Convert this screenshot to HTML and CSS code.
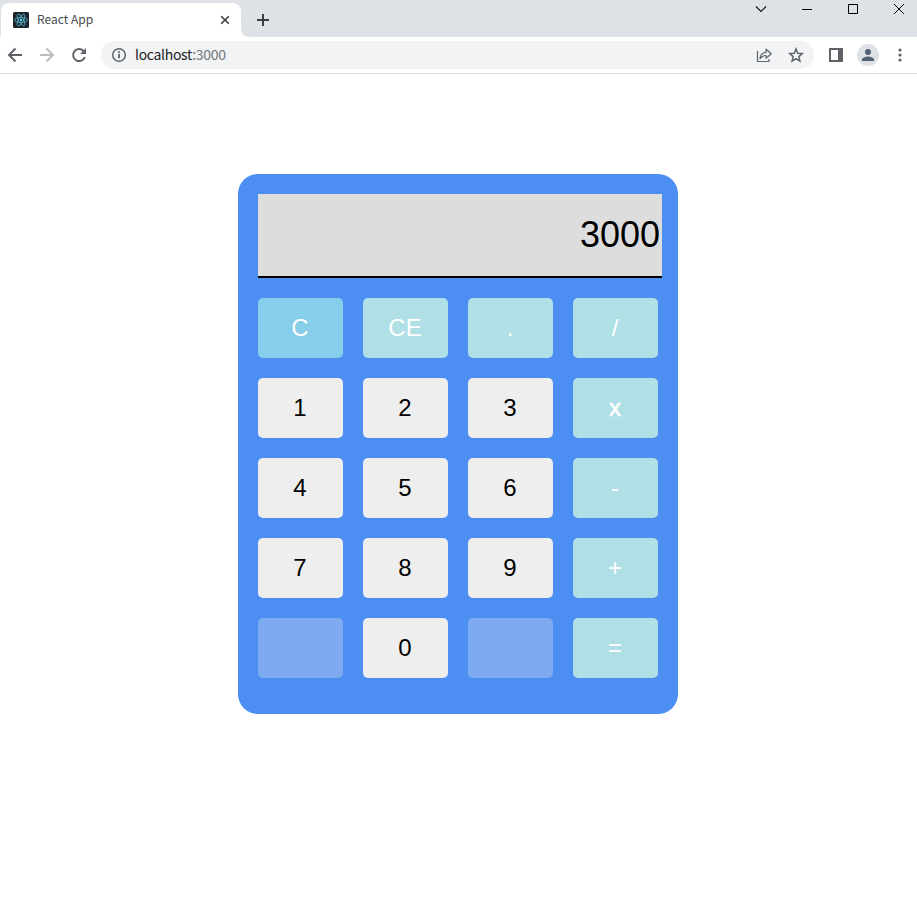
FILE: index.html
```
<!DOCTYPE html>
<html lang="en">
<head>
<meta charset="utf-8">
<title>React App</title>
<link rel="stylesheet" href="styles.css">
</head>
<body>
<header class="browser">
  <div class="tabstrip">
    <div class="tab">
      <svg class="favicon" width="16" height="16" viewBox="0 0 16 16"><rect width="16" height="16" rx="1.5" fill="#20232a"/><g fill="none" stroke="#53b5cf" stroke-width=".8"><ellipse cx="8" cy="8" rx="6.5" ry="2.5"/><ellipse cx="8" cy="8" rx="6.5" ry="2.5" transform="rotate(60 8 8)"/><ellipse cx="8" cy="8" rx="6.5" ry="2.5" transform="rotate(120 8 8)"/></g><circle cx="8" cy="8" r="1.3" fill="#61dafb"/></svg>
      <span class="tab-title">React App</span>
      <svg class="tab-close" width="10" height="10" viewBox="0 0 10 10"><path d="M1.2 1.2l7.6 7.6M8.8 1.2L1.2 8.8" stroke="#3c4043" stroke-width="1.6"/></svg>
    </div>
    <svg class="tab-curve" width="8" height="8" viewBox="0 0 8 8"><path d="M0 0v8h8a8 8 0 0 1-8-8z" fill="#fff"/></svg>
    <svg class="new-tab" width="12" height="12" viewBox="0 0 12 12"><path d="M6 0v12M0 6h12" stroke="#3c4043" stroke-width="2"/></svg>
    <div class="window-controls">
      <svg width="12" height="12" viewBox="0 0 12 12"><path d="M1 3.5l5 5 5-5" fill="none" stroke="#111" stroke-width="1.1"/></svg>
      <svg width="12" height="12" viewBox="0 0 12 12"><path d="M1 6.5h10" stroke="#000"/></svg>
      <svg width="12" height="12" viewBox="0 0 12 12"><path d="M1.5 1.5h9v9h-9z" fill="none" stroke="#000"/></svg>
      <svg width="12" height="12" viewBox="0 0 12 12"><path d="M1 1l10 10M11 1L1 11" stroke="#000"/></svg>
    </div>
  </div>
  <div class="toolbar">
    <svg class="nav" width="16" height="16" viewBox="0 0 16 16"><path d="M15 8H2M8.5 1.5L2 8l6.500 6.500" fill="none" stroke="#5f6368" stroke-width="2"/></svg>
    <svg class="nav" width="16" height="16" viewBox="0 0 16 16"><path d="M1 8h13M7.500 1.500L14 8l-6.500 6.500" fill="none" stroke="#babcbe" stroke-width="2"/></svg>
    <svg class="nav" width="16" height="16" viewBox="0 0 16 16"><path d="M13.800 10A6 6 0 1 1 12.500 4L14 5.500" fill="none" stroke="#5f6368" stroke-width="2"/><path d="M15 1v6H9z" fill="#5f6368"/></svg>
    <div class="address">
      <svg width="16" height="16" viewBox="0 0 16 16"><circle cx="8" cy="8" r="6.300" fill="none" stroke="#5f6368" stroke-width="1.500"/><path d="M8 7v4.300M8 4.200v1.800" stroke="#5f6368" stroke-width="1.800"/></svg>
      <span class="url">localhost<span class="port">:3000</span></span>
      <svg class="share" width="16" height="16" viewBox="0 0 16 16"><path d="M1.500 4v10.500h11.500v-2.500" fill="none" stroke="#5f6368" stroke-width="1.200"/><path d="M4 11.500c.5-4 2.500-6 6-6V2.200L15.300 6.700l-5.300 4.500V8.500c-2.500 0-4 .8-6 3z" fill="none" stroke="#5f6368" stroke-width="1.200" stroke-linejoin="round"/></svg>
      <svg class="star" width="16" height="16" viewBox="0 0 16 16"><path d="M8 2l1.750 4.200 4.550.4-3.450 3 1.050 4.500L8 11.700l-3.900 2.400 1.050-4.500-3.450-3 4.550-.4z" fill="none" stroke="#5f6368" stroke-width="1.500"/></svg>
    </div>
    <svg class="panel-icon" width="14" height="14" viewBox="0 0 14 14"><path fill="#5f6368" fill-rule="evenodd" d="M0 0h14v14H0zM2 2v10h7V2z"/></svg>
    <svg class="avatar" width="22" height="22" viewBox="0 0 22 22"><circle cx="11" cy="11" r="11" fill="#dee1e6"/><circle cx="11" cy="8" r="3" fill="#535f73"/><path d="M5 17v-1.500c0-2 4-3 6-3s6 1 6 3V17z" fill="#535f73"/></svg>
    <svg class="menu-icon" width="4" height="14" viewBox="0 0 4 14"><g fill="#5f6368"><circle cx="2" cy="2" r="1.600"/><circle cx="2" cy="7" r="1.600"/><circle cx="2" cy="12" r="1.600"/></g></svg>
  </div>
</header>
<main class="calculator">
  <div class="display">3000</div>
  <div class="keys">
    <button class="key clear">C</button><button class="key op">CE</button><button class="key op">.</button><button class="key op">/</button>
    <button class="key">1</button><button class="key">2</button><button class="key">3</button><button class="key op strong">x</button>
    <button class="key">4</button><button class="key">5</button><button class="key">6</button><button class="key op">-</button>
    <button class="key">7</button><button class="key">8</button><button class="key">9</button><button class="key op">+</button>
    <button class="key blank"></button><button class="key">0</button><button class="key blank"></button><button class="key op">=</button>
  </div>
</main>
</body>
</html>
```
FILE: styles.css
```
* { box-sizing: border-box; }
body { margin: 0; background: #fff; font-family: "Liberation Sans", Arial, sans-serif; }
svg { display: block; flex: none; }

.browser { height: 74px; border-bottom: 1px solid #dadce0; font-family: "Noto Sans CJK KR", sans-serif; }
.tabstrip { display: flex; height: 37px; background: #dee1e6; padding-left: 1px; }
.tab { display: flex; align-items: center; width: 240px; height: 34px; margin-top: 3px; padding: 0 11px 0 12px; background: #fff; border-radius: 8px 8px 0 0; }
.tab-title { flex: 1; margin-left: 8px; padding-bottom: 2px; font-size: 12px; line-height: 16px; color: #45494d; }
.tab-curve { align-self: flex-end; }
.new-tab { margin: 14px 0 0 8px; }
.window-controls { display: flex; gap: 34px; margin: 3px 12px 0 auto; }

.toolbar { display: flex; align-items: center; height: 36px; padding-left: 7px; }
.nav { margin-right: 16px; }
.address { display: flex; align-items: center; width: 713px; height: 28px; margin-left: -2px; padding: 0 10px; border-radius: 14px; background: #f1f3f4; }
.url { flex: 1; margin-left: 8px; padding-bottom: 2px; font-size: 14px; line-height: 20px; letter-spacing: -0.31px; color: #202124; }
.port { color: #70757a; }
.star { margin-left: 16px; }
.panel-icon { margin-left: 15px; }
.avatar { margin-left: 14px; }
.menu-icon { margin-left: 19px; }

.calculator { width: 440px; height: 540px; margin: 100px 0 0 238px; padding: 20px; border-radius: 20px; background: #4d8ef2; }
.display { width: 404px; height: 84px; padding: 0 2px; border-bottom: 2px solid #000; background: #ddd; color: #000; font-size: 36px; line-height: 81px; text-align: right; }
.keys { display: grid; grid-template-columns: repeat(4, 85px); grid-auto-rows: 60px; gap: 20px; margin-top: 20px; }
.key { border: 0; border-radius: 5px; padding: 0 1px 0 0; background: #eee; color: #000; font: 24px "Liberation Sans", Arial, sans-serif; }
.op { background: #b0e0e6; color: #fff; }
.strong { -webkit-text-stroke: 0.5px #fff; }
.clear { background: #87ceeb; color: #fff; }
.blank { background: #7eaaf0; }
```
